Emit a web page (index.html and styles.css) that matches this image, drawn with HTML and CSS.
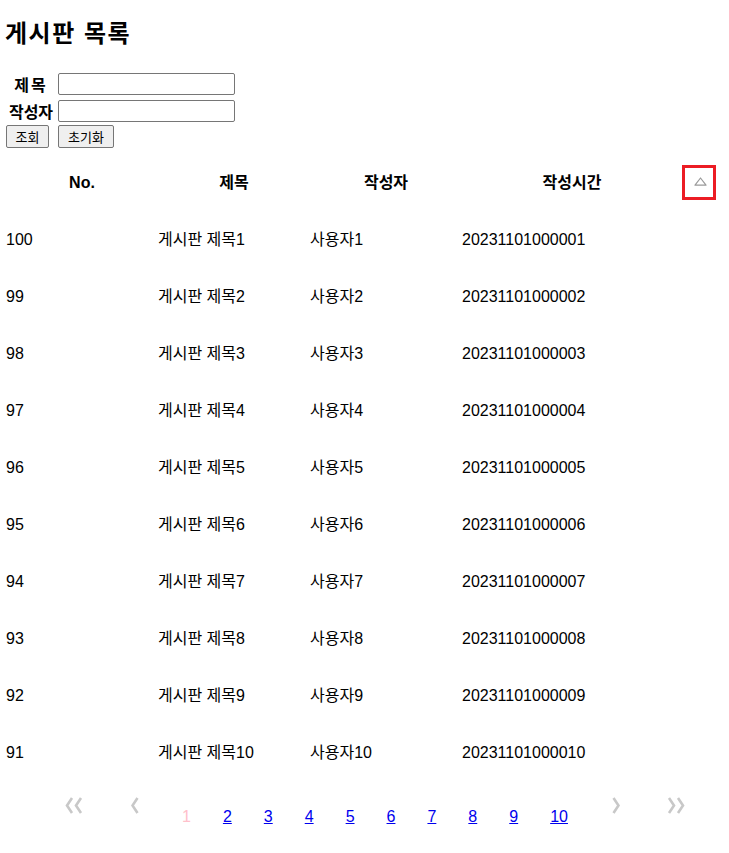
FILE: index.html
```html
<!DOCTYPE html>
<html lang="ko">
<head>
<meta charset="utf-8">
<title>게시판 목록</title>
<link rel="stylesheet" href="styles.css">
</head>
<body>
<div class="page">
  <h1 class="title">게시판 목록</h1>
  <form class="search">
    <label class="lbl lbl-title">제목</label>
    <input class="inp" type="text">
    <label class="lbl">작성자</label>
    <input class="inp" type="text">
    <div class="btns">
      <button type="button" class="btn btn-search">조회</button>
      <button type="button" class="btn btn-reset">초기화</button>
    </div>
  </form>

  <div class="board">
    <div class="row head">
      <div class="c">No.</div>
      <div class="c">제목</div>
      <div class="c">작성자</div>
      <div class="c">작성시간</div>
      <div class="c sortcell">
        <span class="sortbox">
          <svg class="tri" width="13" height="9" viewBox="0 0 13 9"><path d="M6.5 1 L12 8.2 L1 8.2 Z" fill="none" stroke="#9a9a9a" stroke-width="1.2" stroke-linejoin="round"/></svg>
        </span>
      </div>
    </div>
    <div class="row"><div class="c">100</div><div class="c">게시판 제목1</div><div class="c">사용자1</div><div class="c">20231101000001</div><div class="c"></div></div>
    <div class="row"><div class="c">99</div><div class="c">게시판 제목2</div><div class="c">사용자2</div><div class="c">20231101000002</div><div class="c"></div></div>
    <div class="row"><div class="c">98</div><div class="c">게시판 제목3</div><div class="c">사용자3</div><div class="c">20231101000003</div><div class="c"></div></div>
    <div class="row"><div class="c">97</div><div class="c">게시판 제목4</div><div class="c">사용자4</div><div class="c">20231101000004</div><div class="c"></div></div>
    <div class="row"><div class="c">96</div><div class="c">게시판 제목5</div><div class="c">사용자5</div><div class="c">20231101000005</div><div class="c"></div></div>
    <div class="row"><div class="c">95</div><div class="c">게시판 제목6</div><div class="c">사용자6</div><div class="c">20231101000006</div><div class="c"></div></div>
    <div class="row"><div class="c">94</div><div class="c">게시판 제목7</div><div class="c">사용자7</div><div class="c">20231101000007</div><div class="c"></div></div>
    <div class="row"><div class="c">93</div><div class="c">게시판 제목8</div><div class="c">사용자8</div><div class="c">20231101000008</div><div class="c"></div></div>
    <div class="row"><div class="c">92</div><div class="c">게시판 제목9</div><div class="c">사용자9</div><div class="c">20231101000009</div><div class="c"></div></div>
    <div class="row"><div class="c">91</div><div class="c">게시판 제목10</div><div class="c">사용자10</div><div class="c">20231101000010</div><div class="c"></div></div>
  </div>

  <nav class="pager">
    <span class="arr arr-first"><svg width="18" height="17" viewBox="0 0 18 17"><path d="M7 1 L2 8.5 L7 16 M16 1 L11 8.5 L16 16" fill="none" stroke="#c8c8c8" stroke-width="2.6"/></svg></span>
    <span class="arr arr-prev"><svg width="8" height="17" viewBox="0 0 8 17"><path d="M6.5 1 L1.5 8.5 L6.5 16" fill="none" stroke="#c8c8c8" stroke-width="2.6"/></svg></span>
    <span class="num cur">1</span>
    <a class="num" href="#">2</a>
    <a class="num" href="#">3</a>
    <a class="num" href="#">4</a>
    <a class="num" href="#">5</a>
    <a class="num" href="#">6</a>
    <a class="num" href="#">7</a>
    <a class="num" href="#">8</a>
    <a class="num" href="#">9</a>
    <a class="num" href="#">10</a>
    <span class="arr arr-next"><svg width="8" height="17" viewBox="0 0 8 17"><path d="M1.5 1 L6.5 8.5 L1.5 16" fill="none" stroke="#c8c8c8" stroke-width="2.6"/></svg></span>
    <span class="arr arr-last"><svg width="18" height="17" viewBox="0 0 18 17"><path d="M2 1 L7 8.5 L2 16 M11 1 L16 8.5 L11 16" fill="none" stroke="#c8c8c8" stroke-width="2.6"/></svg></span>
  </nav>
</div>
</body>
</html>
```
FILE: styles.css
```css
html, body {
  margin: 0;
  padding: 0;
  background: #fff;
}
body {
  font-family: "Liberation Sans", "Noto Sans CJK KR", sans-serif;
  font-size: 16px;
  color: #000;
}
.page {
  padding: 0 0 0 6px;
}
.title {
  font-family: "Noto Sans CJK KR", sans-serif;
  font-size: 24px;
  font-weight: bold;
  line-height: 32px;
  letter-spacing: 1.5px;
  margin: 16px 0 24px -1px;
}
.search {
  display: grid;
  grid-template-columns: 50px 177px;
  column-gap: 2px;
  row-gap: 5px;
  padding-top: 1px;
  align-items: center;
}
.lbl {
  font-family: "Noto Sans CJK KR", sans-serif;
  font-weight: bold;
  text-align: center;
  line-height: 22px;
}
.lbl-title {
  letter-spacing: 2px;
}
.inp {
  box-sizing: border-box;
  width: 177px;
  height: 22px;
  margin: 0;
  border: 1px solid #767676;
  border-radius: 2px;
  padding: 1px 2px;
}
.btns {
  grid-column: 1 / 3;
  display: flex;
  gap: 9px;
  margin-top: -2px;
}
.btn {
  box-sizing: border-box;
  height: 23px;
  margin: 0;
  padding: 0;
  font-family: "Noto Sans CJK KR", sans-serif;
  font-size: 13px;
  line-height: 19px;
  background: #efefef;
  border: 1px solid #767676;
  border-radius: 2px;
  color: #000;
}
.btn-search { width: 43px; }
.btn-reset { width: 56px; }

.board {
  margin-top: 6px;
  width: 712px;
}
.row {
  display: grid;
  grid-template-columns: 152px 152px 152px 220px 36px;
  height: 57px;
  align-items: center;
  line-height: 20px;
}
.head .c {
  font-weight: bold;
  text-align: center;
}
.sortcell {
  display: flex;
  align-items: center;
}
.sortbox {
  box-sizing: border-box;
  width: 34px;
  height: 35px;
  border: 3px solid #ec1c24;
  display: flex;
  align-items: center;
  justify-content: center;
  padding-bottom: 2px;
  padding-left: 2px;
}
.tri { display: block; }

.pager {
  display: flex;
  align-items: flex-start;
  padding-left: 59px;
  margin-top: 16px;
  height: 57px;
}
.arr {
  display: block;
  height: 17px;
}
.arr svg { display: block; }
.arr-prev { margin-left: 48px; }
.arr-next { margin-left: 28px; }
.arr-last { margin-left: 47px; }
.num {
  display: block;
  padding: 0 16px;
  margin-top: 10px;
  line-height: 20px;
  color: #0000ee;
  text-decoration: underline;
}
.arr-prev + .num { margin-left: 27px; }
.num.cur {
  color: #ffc0cb;
  text-decoration: none;
}
```
